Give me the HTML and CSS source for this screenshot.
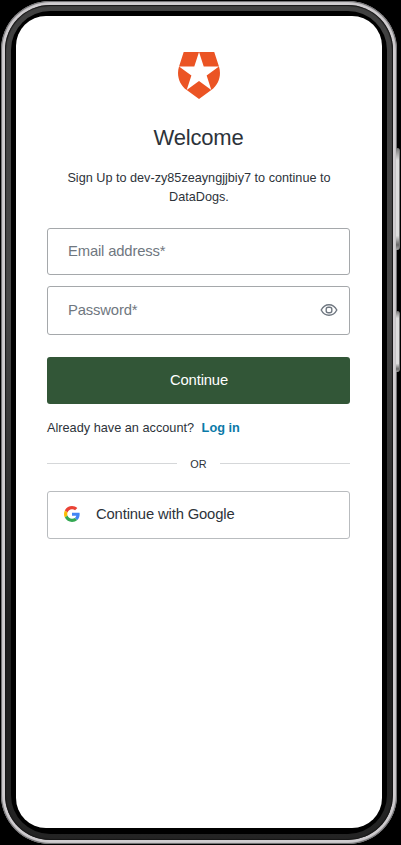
FILE: index.html
```html
<!DOCTYPE html>
<html lang="en">
<head>
<meta charset="utf-8">
<title>Welcome</title>
<link rel="stylesheet" href="styles.css">
</head>
<body>
<div class="phone">
  <span class="key volume"></span>
  <span class="key power"></span>
  <div class="rim"><div class="bezel">
    <main class="screen">
      <svg class="logo" viewBox="1.5 0 21 24" preserveAspectRatio="none"><path fill="#eb5424" d="M21.98 7.448L19.62 0H4.347L2.02 7.448c-1.352 4.312.03 9.206 3.815 12.015L12.007 24l6.157-4.552c3.755-2.81 5.182-7.688 3.815-12.015l-6.16 4.58 2.343 7.45-6.157-4.597-6.158 4.58 2.358-7.433-6.188-4.55 7.63-.045L12.008 0l2.356 7.404 7.615.044z"/></svg>
      <h1>Welcome</h1>
      <p class="intro">Sign Up to dev-zy85zeayngjjbiy7 to continue to DataDogs.</p>
      <div class="field email"><span>Email address*</span></div>
      <div class="field password"><span>Password*</span>
        <svg class="eye" viewBox="0 0 18 14" fill="none" stroke="#6f7780" stroke-width="1.4"><path d="M1.200 7C3 3.500 5.800 1.700 9 1.700S15 3.500 16.800 7C15 10.500 12.200 12.300 9 12.300S3 10.500 1.200 7z"/><rect x="6.200" y="4.200" width="5.600" height="5.600" rx="2"/></svg>
      </div>
      <button class="continue">Continue</button>
      <p class="login">Already have an account? <a>Log in</a></p>
      <div class="divider"><span>OR</span></div>
      <div class="google">
        <svg viewBox="0 0 48 48"><path fill="#ea4335" d="M24 9.500c3.540 0 6.710 1.220 9.210 3.600l6.850-6.850C35.900 2.380 30.470 0 24 0 14.620 0 6.510 5.380 2.560 13.220l7.980 6.190C12.430 13.720 17.740 9.500 24 9.500z"/><path fill="#4285f4" d="M46.980 24.550c0-1.570-.15-3.090-.38-4.550H24v9.020h12.940c-.58 2.960-2.260 5.480-4.780 7.180l7.730 6c4.510-4.180 7.090-10.360 7.090-17.650z"/><path fill="#fbbc05" d="M10.530 28.590c-.48-1.450-.76-2.990-.76-4.590s.27-3.140.76-4.590l-7.980-6.190C.92 16.460 0 20.120 0 24c0 3.880.92 7.540 2.560 10.780l7.970-6.190z"/><path fill="#34a853" d="M24 48c6.480 0 11.930-2.130 15.890-5.810l-7.730-6c-2.150 1.450-4.920 2.300-8.160 2.300-6.260 0-11.570-4.220-13.470-9.910l-7.980 6.190C6.510 42.620 14.620 48 24 48z"/></svg>
        <span>Continue with Google</span>
      </div>
    </main>
  </div></div>
</div>
</body>
</html>
```
FILE: styles.css
```css
* { box-sizing: border-box; }
body {
  margin: 0;
  background: #000;
  color: #2d333a;
  font-family: "Liberation Sans", Arial, sans-serif;
  height: 845px;
  overflow: hidden;
}
.phone {
  position: relative;
  width: 396px;
  height: 843px;
  margin: 1px 0 0 1px;
  padding: 4px;
  border-radius: 49px;
  background: #cfcccf;
  box-shadow: inset 0 0 1px 1px #69696b;
}
.rim {
  height: 835px;
  padding: 6px;
  border-radius: 45px;
  background: linear-gradient(#414141, #494949 35%, #1f1f1f 75%, #242424);
  box-shadow: inset 0 0 1px 1px #161616;
}
.bezel {
  height: 823px;
  padding: 5px 5px 6px;
  border-radius: 39px;
  background: #000;
}
.key {
  position: absolute;
  left: 395px;
  width: 4px;
  border-radius: 0 3px 3px 0;
  border-right: 1px solid #777;
  background: linear-gradient(#777, #ddd 12%, #ddd 86%, #666 95%, #aaa);
}
.volume { top: 147px; height: 102px; }
.power { top: 310px; height: 61px; }
.screen {
  height: 812px;
  padding: 36px 32px 0 31px;
  border-radius: 30px;
  background: #fff;
  display: flex;
  flex-direction: column;
}
.logo { width: 42px; height: 47px; margin-left: 1px; align-self: center; }
h1 {
  margin: 25px 0 0;
  font-size: 22px;
  letter-spacing: -0.180px;
  font-weight: 400;
  line-height: 28px;
  text-align: center;
}
.intro {
  margin: 17px 0 0;
  padding: 0 14px 0 15px;
  font-size: 12.670px;
  line-height: 18.500px;
  text-align: center;
}
.field {
  display: flex;
  align-items: center;
  justify-content: space-between;
  height: 47px;
  padding: 0 11px 1px 20px;
  border: 1px solid #a5a8ab;
  border-radius: 3px;
  color: #6f7780;
  font-size: 14.800px;
  letter-spacing: -0.150px;
}
.email { margin-top: 22px; }
.password { height: 49px; margin-top: 11px; }
.eye { width: 18px; height: 14px; }
.continue {
  height: 47px;
  margin-top: 22px;
  padding: 0 0 2px 1px;
  border: 0;
  border-radius: 3px;
  background: #325637;
  color: #fff;
  font: 14.800px "Liberation Sans", Arial, sans-serif;
  letter-spacing: -0.150px;
}
.login { margin: 15px 0 0; font-size: 12.730px; line-height: 18px; }
.login a { margin-left: 4px; color: #0a7aa8; font-weight: 700; }
.divider {
  display: flex;
  align-items: center;
  gap: 13px;
  height: 16px;
  margin-top: 19px;
  font-size: 10.900px;
}
.divider::before, .divider::after {
  content: "";
  flex: 1;
  height: 1px;
  margin-bottom: 1px;
  background: #d5d7d9;
}
.google {
  display: flex;
  align-items: center;
  gap: 16px;
  height: 48px;
  margin-top: 19px;
  padding: 0 0 2px 16px;
  border: 1px solid #b9bcbf;
  border-radius: 3px;
  font-size: 14.800px;
  letter-spacing: -0.150px;
}
.google svg { width: 16px; height: 16px; }
```
